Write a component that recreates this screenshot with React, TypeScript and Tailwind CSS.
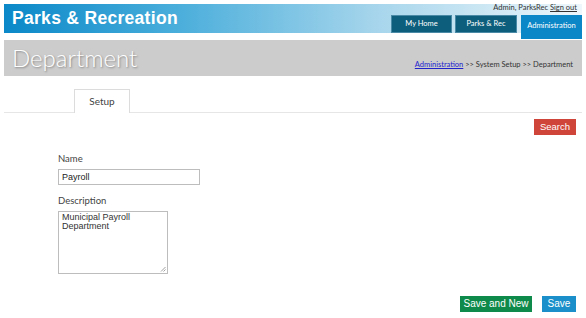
import React from "react";

export default function App() {
  return (
    <div className="w-[586px] h-[318px] bg-white overflow-hidden" style={{ fontFamily: "Lato, 'Open Sans', sans-serif" }}>
      {/* Header */}
      <div className="mx-[4px] mt-[4px] h-[36px] flex justify-between bg-[linear-gradient(to_right,#0a88c8_0%,#4aaedb_30%,#a8d6ec_65%,#eef7fb_100%)] bg-no-repeat bg-[length:100%_29px]">
        <div className="pl-[8px] h-[29px] flex items-center">
          <span className="text-white text-[17.5px] font-bold tracking-[0.3px]" style={{ fontFamily: "'Liberation Sans', Arial, sans-serif", fontWeight: 900 }}>
            Parks &amp; Recreation
          </span>
        </div>
        <div className="flex flex-col items-end">
          <div className="h-[11px] leading-[10px] text-[7.5px] text-[#333] pr-[5px] -mt-[1px]">
            Admin, ParksRec <span className="underline">Sign out</span>
          </div>
          <div className="flex items-start gap-[3px] mt-[1px]">
            <div className="w-[61px] h-[18px] bg-[#0d5e7c] text-white text-[7.5px] flex items-center justify-center border border-[#4a8aa6]">My Home</div>
            <div className="w-[62px] h-[18px] bg-[#0d5e7c] text-white text-[7.5px] flex items-center justify-center border border-[#4a8aa6] mr-[1px]">Parks &amp; Rec</div>
            <div className="w-[61px] h-[24px] bg-[#0b86c6] text-white text-[7.5px] flex items-start pt-[5px] justify-center">Administration</div>
          </div>
        </div>
      </div>

      {/* Title bar */}
      <div className="mx-[4px] h-[36px] bg-[#cccccc] flex items-end justify-between">
        <div className="pl-[8px] pb-[4px] text-[24px] leading-[28px] text-white font-light" style={{ textShadow: "1px 1px 2px rgba(0,0,0,0.35)" }}>
          Department
        </div>
        <div className="pr-[9px] pb-[6px] text-[7.5px] text-[#333]">
          <span className="underline text-[#2222cc]">Administration</span> &gt;&gt; System Setup &gt;&gt; Department
        </div>
      </div>

      {/* Tabs */}
      <div className="mx-[4px] mt-[13px] border-b border-[#e6e6e6] h-[24px] flex">
        <div className="ml-[70px] w-[56px] h-[24px] border border-b-0 border-[#dcdcdc] bg-white flex items-center justify-center text-[10px] text-[#444]">
          Setup
        </div>
      </div>

      {/* Search */}
      <div className="flex justify-end pr-[10px] mt-[6px]">
        <button className="w-[42px] h-[16px] bg-[#d0453a] text-white text-[9.5px] leading-[16px]" style={{ fontFamily: "'Liberation Sans', Arial, sans-serif" }}>
          Search
        </button>
      </div>

      {/* Form */}
      <div className="ml-[58px] mt-[18px] flex flex-col">
        <div className="text-[9.5px] text-[#444] leading-[12px]">Name</div>
        <div className="mt-[4px] w-[142px] h-[16px] border border-[#bdbdbd] text-[9px] leading-[14px] pl-[3px] text-[#222]" style={{ fontFamily: "'Liberation Sans', Arial, sans-serif" }}>
          Payroll
        </div>
        <div className="mt-[10px] text-[9.5px] text-[#444] leading-[12px]">Description</div>
        <div className="mt-[4px] w-[110px] h-[63px] border border-[#bdbdbd] text-[9px] leading-[9px] pl-[3px] pt-[1px] text-[#333] relative" style={{ fontFamily: "'Liberation Sans', Arial, sans-serif" }}>
          <div>Municipal Payroll</div>
          <div>Department</div>
          <svg className="absolute right-[1px] bottom-[1px]" width="6" height="6" viewBox="0 0 6 6">
            <path d="M5.5 1 L1 5.5 M5.5 3.5 L3.5 5.5" stroke="#888" strokeWidth="0.8" />
          </svg>
        </div>
      </div>

      {/* Bottom buttons */}
      <div className="flex justify-end pr-[10px] mt-[22px] gap-[10px]" style={{ fontFamily: "'Liberation Sans', Arial, sans-serif" }}>
        <button className="w-[72px] h-[16px] bg-[#0e8a4b] text-white text-[10px] leading-[16px]">Save and New</button>
        <button className="w-[34px] h-[16px] bg-[#1b8fc9] text-white text-[10px] leading-[16px]">Save</button>
      </div>
    </div>
  );
}
